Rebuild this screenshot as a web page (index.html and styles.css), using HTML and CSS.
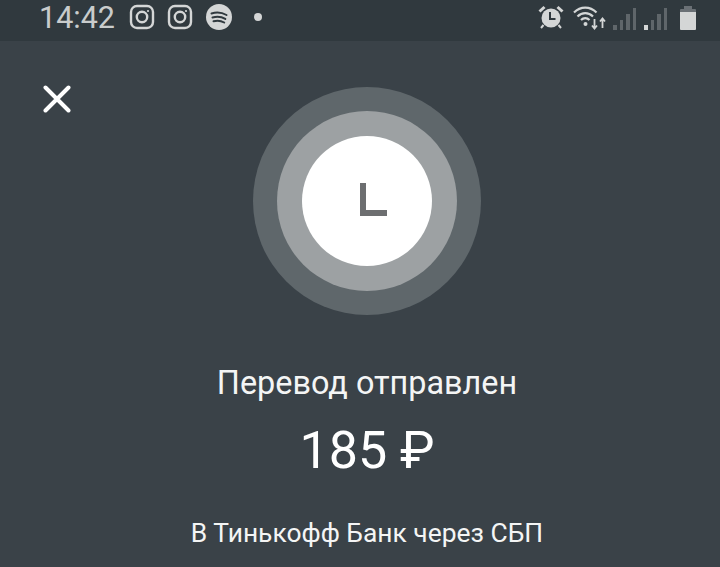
FILE: index.html
```html
<!DOCTYPE html>
<html lang="ru">
<head>
  <meta charset="UTF-8" />
  <meta name="viewport" content="width=device-width, initial-scale=1.0"/>
  <title>Перевод отправлен</title>
  <link rel="stylesheet" href="styles.css">
</head>
<body>

  <div class="status-bar">
    <div class="status-left">
      <span class="status-time">14:42</span>
      <svg class="status-icon" width="26" height="26" viewBox="0 0 26 26" fill="none" stroke="#d4d6d6" stroke-width="2.4">
        <rect x="2" y="2" width="22" height="22" rx="6"/>
        <circle cx="13" cy="13" r="5.2"/>
        <circle cx="19" cy="7" r="1.1" fill="#d4d6d6" stroke="none"/>
      </svg>
      <svg class="status-icon status-icon-last" width="26" height="26" viewBox="0 0 26 26" fill="none" stroke="#d4d6d6" stroke-width="2.4">
        <rect x="2" y="2" width="22" height="22" rx="6"/>
        <circle cx="13" cy="13" r="5.2"/>
        <circle cx="19" cy="7" r="1.1" fill="#d4d6d6" stroke="none"/>
      </svg>
      <svg width="26" height="26" viewBox="0 0 26 26" fill="none">
        <circle cx="13" cy="13" r="13" fill="#d4d6d6"/>
        <path d="M5.5 9.5c5-1.500 10.500-1 15 1.500M6.500 13.500c4.500-1.200 9-.8 12.800 1.400M7.500 17.300c3.800-1 7.500-.6 10.700 1.200" stroke="#30393e" stroke-width="2" stroke-linecap="round"/>
      </svg>
      <span class="status-dot"></span>
    </div>
    <div class="status-right">
      <svg class="alarm-icon" width="28" height="26" viewBox="0 0 28 26" fill="none">
        <circle cx="14" cy="14" r="9.500" fill="#d4d6d6"/>
        <path d="M1.500 6.500l5-4.500 2 2-5 4.500zM26.500 6.500l-5-4.500-2 2 5 4.500z" fill="#d4d6d6"/>
        <path d="M6.500 21l-2.500 3M21.500 21l2.500 3" stroke="#d4d6d6" stroke-width="2"/>
        <path d="M13 8v7h5.500" stroke="#30393e" stroke-width="2"/>
      </svg>
      <svg class="wifi-icon" width="34" height="26" viewBox="0 0 34 26" fill="none">
        <path d="M1 8.500c6.500-6.500 16-6.500 22.500 0M4.500 12.500c4.500-4.500 11-4.500 15.500 0M8 16c2.500-2.500 6-2.500 8.500 0" stroke="#d4d6d6" stroke-width="2.200"/>
        <circle cx="12.500" cy="20" r="2" fill="#d4d6d6"/>
        <path d="M21.500 15v9M19 21.500l2.500 3 2.500-3M29.500 24v-9M27 17.500l2.500-3 2.500 3" stroke="#d4d6d6" stroke-width="1.800"/>
      </svg>
      <div class="signal">
        <span class="signal-bar signal-bar-1"></span>
        <span class="signal-bar signal-bar-2"></span>
        <span class="signal-bar signal-bar-3"></span>
        <span class="signal-bar signal-bar-4"></span>
      </div>
      <div class="signal signal-last">
        <span class="signal-bar signal-bar-1 signal-bar-on"></span>
        <span class="signal-bar signal-bar-2"></span>
        <span class="signal-bar signal-bar-3"></span>
        <span class="signal-bar signal-bar-4"></span>
      </div>
      <div class="battery">
        <span class="battery-cap"></span>
        <span class="battery-body"></span>
      </div>
    </div>
  </div>

  <div class="screen">
    <button class="close-button" aria-label="Закрыть">
      <svg width="28" height="28" viewBox="0 0 28 28" fill="none" stroke="#ffffff" stroke-width="4" stroke-linecap="round">
        <path d="M2.500 2.500l23 23M25.500 2.500l-23 23"/>
      </svg>
    </button>

    <div class="content">
      <div class="ring-outer">
        <div class="ring-middle">
          <div class="ring-inner">
            <svg width="27" height="33" viewBox="0 0 27 33" fill="none" stroke="#6d6e70" stroke-width="6">
              <path d="M3 0v30h24"/>
            </svg>
          </div>
        </div>
      </div>
      <div class="status-title">Перевод отправлен</div>
      <div class="amount">185 ₽</div>
      <div class="details">В Тинькофф Банк через СБП</div>
    </div>
  </div>

</body>
</html>
```

FILE: styles.css
```css
body {
  font-family: Roboto, "Liberation Sans", sans-serif;
  background-color: #3a4248;
  margin: 0;
  height: 567px;
  overflow: hidden;
}

.status-bar {
  display: flex;
  justify-content: space-between;
  align-items: center;
  height: 41px;
  padding: 0 24px 7px 39px;
  box-sizing: border-box;
  background-color: #30393e;
}

.status-left {
  display: flex;
  align-items: center;
}

.status-time {
  font-size: 30.5px;
  color: #c9cccc;
  margin-right: 14px;
}

.status-icon {
  margin-right: 12px;
}

.status-icon-last {
  margin-right: 13px;
}

.status-dot {
  width: 8px;
  height: 8px;
  margin-left: 22px;
  border-radius: 50%;
  background-color: #d4d6d6;
}

.status-right {
  display: flex;
  align-items: center;
}

.alarm-icon {
  margin-right: 8px;
}

.wifi-icon {
  margin-right: 6px;
}

.signal {
  display: flex;
  align-items: flex-end;
  gap: 3px;
  height: 22px;
  margin-top: 3px;
  margin-right: 8px;
}

.signal-last {
  margin-right: 13px;
}

.signal-bar {
  width: 3.5px;
  background-color: #5f666a;
}

.signal-bar-1 {
  height: 5px;
}

.signal-bar-2 {
  height: 10px;
}

.signal-bar-3 {
  height: 16px;
}

.signal-bar-4 {
  height: 22px;
}

.signal-bar-on {
  background-color: #d4d6d6;
}

.battery {
  display: flex;
  flex-direction: column;
  align-items: center;
  margin-top: 1px;
}

.battery-cap {
  width: 8px;
  height: 3px;
  background-color: #6a7075;
}

.battery-body {
  width: 16px;
  height: 21px;
  border-radius: 1px;
  background: linear-gradient(#6a7075 3px, #d4d6d6 3px);
}

.screen {
  position: relative;
  padding-left: 14px;
}

.close-button {
  position: absolute;
  top: 44px;
  left: 43px;
  padding: 0;
  background: none;
  border: none;
  cursor: pointer;
}

.content {
  display: flex;
  flex-direction: column;
  align-items: center;
  padding-top: 46px;
  color: #ffffff;
}

.ring-outer,
.ring-middle,
.ring-inner {
  display: flex;
  justify-content: center;
  align-items: center;
  border-radius: 50%;
}

.ring-outer {
  width: 228px;
  height: 228px;
  background-color: #5f676b;
}

.ring-middle {
  width: 180px;
  height: 180px;
  background-color: #9da1a3;
}

.ring-inner {
  width: 130px;
  height: 130px;
  background-color: #ffffff;
}

.ring-inner svg {
  margin-left: 13px;
  margin-top: -4px;
}

.status-title {
  margin-top: 48px;
  font-size: 32.4px;
  line-height: 40px;
  color: #f4f5f5;
}

.amount {
  margin-top: 20px;
  font-size: 52px;
  line-height: 56px;
}

.details {
  margin-top: 38px;
  font-size: 26.4px;
  line-height: 32px;
  color: #f4f5f5;
}
```
